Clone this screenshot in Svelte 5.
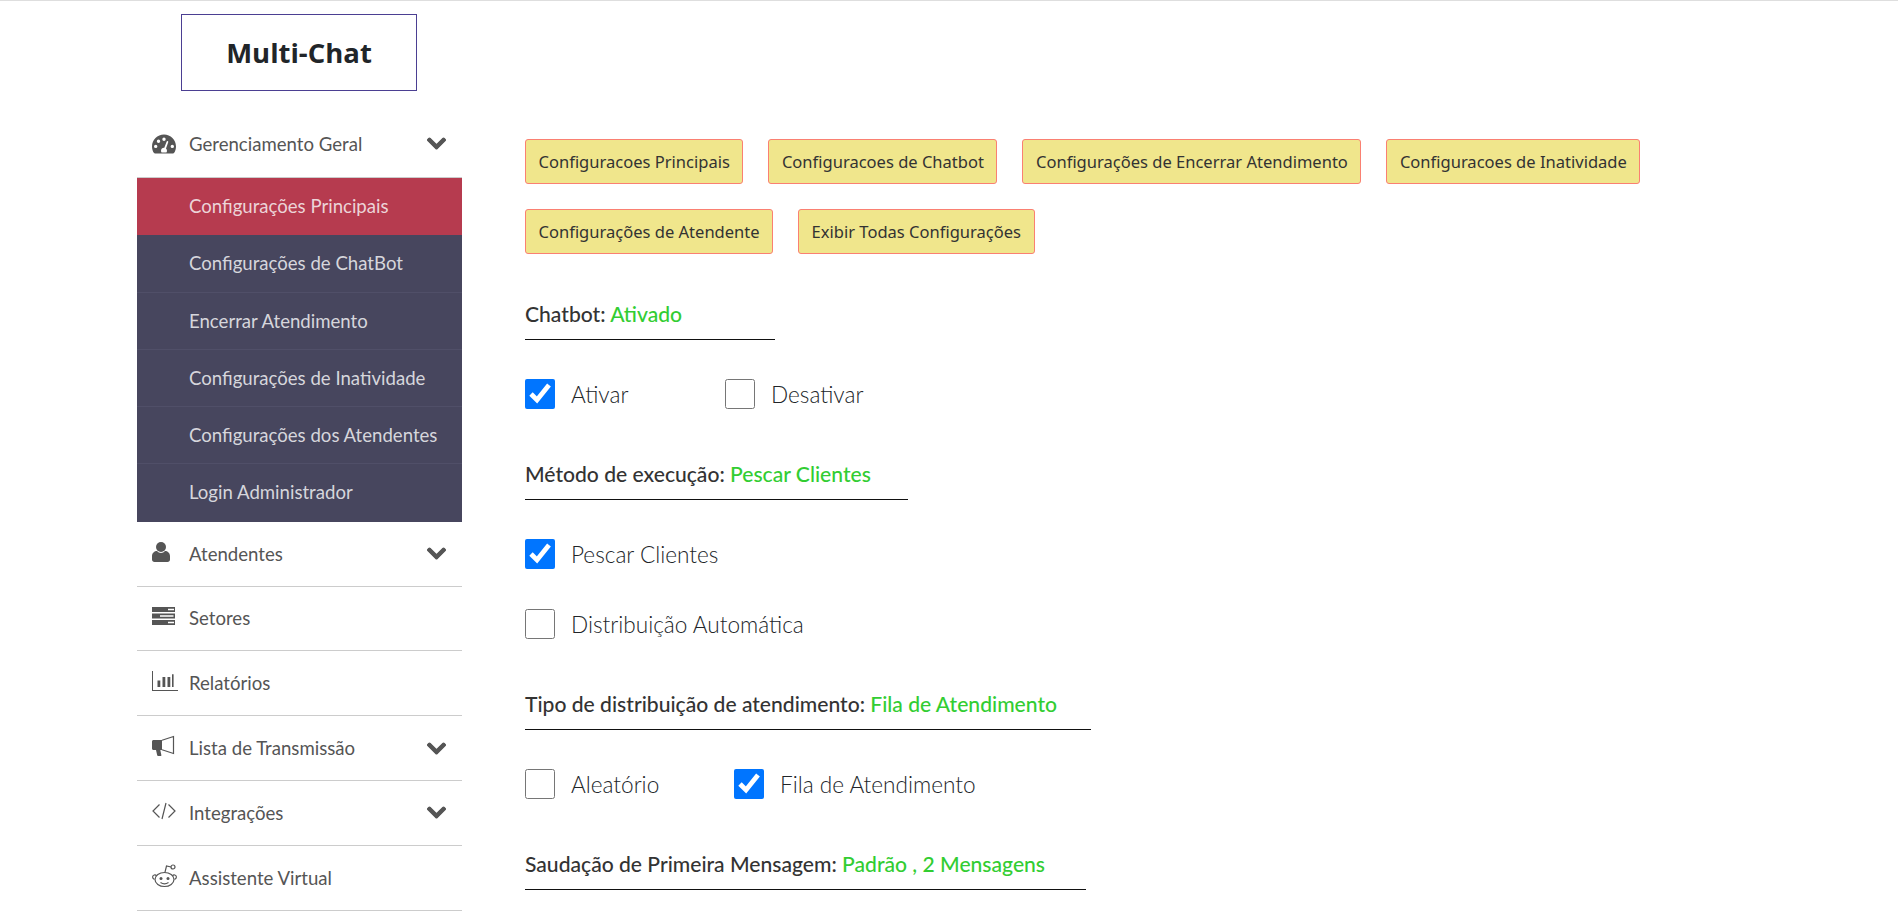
<script>
  const chevron = "M207.03 381.47 12.69 187.13a24 24 0 0 1 0-33.94l22.67-22.67a24 24 0 0 1 33.9 0L224 284.5l154.74-153.98a24 24 0 0 1 33.9 0l22.67 22.67a24 24 0 0 1 0 33.94L240.97 381.47a24 24 0 0 1-33.94 0z";

  const subItems = [
    { label: "Configurações Principais", active: true },
    { label: "Configurações de ChatBot" },
    { label: "Encerrar Atendimento" },
    { label: "Configurações de Inatividade" },
    { label: "Configurações dos Atendentes" },
    { label: "Login Administrador" },
  ];

  const navItems = [
    { label: "Atendentes", icon: "user", arrow: true },
    { label: "Setores", icon: "server" },
    { label: "Relatórios", icon: "chart" },
    { label: "Lista de Transmissão", icon: "bullhorn", arrow: true },
    { label: "Integrações", icon: "code", arrow: true },
    { label: "Assistente Virtual", icon: "reddit" },
  ];

  const buttons = [
    ["Configuracoes Principais", "Configuracoes de Chatbot", "Configurações de Encerrar Atendimento", "Configuracoes de Inatividade"],
    ["Configurações de Atendente", "Exibir Todas Configurações"],
  ];

  const sections = [
    {
      title: "Chatbot:", value: "Ativado", width: 250,
      rows: [[{ label: "Ativar", checked: true, width: 200 }, { label: "Desativar", checked: false }]],
    },
    {
      title: "Método de execução:", value: "Pescar Clientes", width: 383,
      rows: [[{ label: "Pescar Clientes", checked: true }], [{ label: "Distribuição Automática", checked: false }]],
    },
    {
      title: "Tipo de distribuição de atendimento:", value: "Fila de Atendimento", width: 566,
      rows: [[{ label: "Aleatório", checked: false, width: 209 }, { label: "Fila de Atendimento", checked: true }]],
    },
    { title: "Saudação de Primeira Mensagem:", value: "Padrão , 2 Mensagens", width: 561, rows: [] },
  ];
</script>

<div class="page">
  <aside class="sidebar">
    <div class="logo"><span>Multi-Chat</span></div>

    <nav>
      <div class="nav-row head">
        <svg class="icon" viewBox="0 0 26 24" preserveAspectRatio="xMinYMid">
          <path transform="translate(0 2.500)" fill-rule="evenodd" d="M12 0C5.400 0 0 5.300 0 12c0 2.400.7 4.800 2 6.600.3.300.7.400 1 .400h18c.4 0 .8-.1 1-.4 1.300-1.800 2-4.200 2-6.600C24 5.300 18.600 0 12 0zm0 3a1.700 1.700 0 1 1 0 3.400A1.700 1.700 0 0 1 12 3zM6.500 5.100a1.700 1.700 0 1 1 0 3.400 1.700 1.700 0 0 1 0-3.400zM3.700 10.200a1.700 1.700 0 1 1 0 3.400 1.700 1.700 0 0 1 0-3.400zm11.900-3.600c.5.200.8.700.6 1.200l-2.200 6.100c.6.600 1 1.400 1 2.300 0 .7-.2 1.300-.6 1.800H9.600c-.4-.5-.6-1.100-.6-1.800 0-1.700 1.300-3 3-3h.3l2.300-6c.2-.4.600-.7 1-.6zm4.700 3.600a1.700 1.700 0 1 1 0 3.400 1.700 1.700 0 0 1 0-3.400z" />
        </svg>
        <span class="label">Gerenciamento Geral</span>
        <svg class="chevron" viewBox="0 0 448 512"><path d={chevron} /></svg>
      </div>

      <ul class="sub">
        {#each subItems as item}
          <li class:active={item.active}>{item.label}</li>
        {/each}
      </ul>

      {#each navItems as item}
        <div class="nav-row">
          {#if item.icon === "user"}
            <svg class="icon" viewBox="0 0 26 24" preserveAspectRatio="xMinYMid">
              <circle cx="9" cy="7" r="5" />
              <path d="M0 19.500v-3.500C0 13 2.500 11 5 11c1 1.300 2.500 2 4 2s3-.7 4-2c2.500 0 5 2 5 5v3.500c0 1.400-1 2.500-2.500 2.500h-13C1 22 0 20.900 0 19.500z" />
            </svg>
          {:else if item.icon === "server"}
            <svg class="icon" viewBox="0 0 26 24" preserveAspectRatio="xMinYMid">
              <path fill-rule="evenodd" d="M0 3h23v5H0zm16 1.700v1.500h6V4.700zM0 9.500h23v5H0zm8 1.700v1.500h13.500v-1.500zM0 16h23v5H0zm16 1.700v1.500h6v-1.500z" />
            </svg>
          {:else if item.icon === "chart"}
            <svg class="icon" viewBox="0 0 26 24" preserveAspectRatio="xMinYMid">
              <path d="M0 2h1v19h25v1H0z" />
              <path d="M5.500 11.500h2.800V18H5.500zM10.500 8h2.800v10h-2.800zM15.500 8h2.800v10h-2.800zM20 5.300h1.600V18H20z" />
            </svg>
          {:else if item.icon === "bullhorn"}
            <svg class="icon" viewBox="0 0 26 24" preserveAspectRatio="xMinYMid">
              <path d="M1.500 6H10v10H8.300l1.100 5.300c.1.400-.2.700-.6.700H6c-.4 0-.7-.3-.8-.7L4 16H1.500C.7 16 0 15.300 0 14.500v-7C0 6.700.7 6 1.500 6z" />
              <path class="outline" d="M10 6.300 21.500 2.500v17L10 15.700" />
            </svg>
          {:else if item.icon === "code"}
            <svg class="icon" viewBox="0 0 26 24" preserveAspectRatio="xMinYMid">
              <path class="outline" d="M7.500 5.500 1 12l6.500 6.500M16.500 5.500 23 12l-6.500 6.500M14 4 10 20" />
            </svg>
          {:else}
            <svg class="icon" viewBox="0 0 26 24" preserveAspectRatio="xMinYMid">
              <g class="outline">
                <circle cx="21" cy="3" r="2" />
                <path d="M19 3 14.500 2 13 8.200" />
                <ellipse cx="12.500" cy="15.500" rx="9.500" ry="7" />
                <path d="M4.500 11.800C3.500 10.300.6 10.800.6 13c0 1.200.7 2 1.800 2.300M20.500 11.800c1-1.500 3.900-1 3.900 1.200 0 1.200-.7 2-1.800 2.300" />
                <path d="M8.500 18.500c2.200 1.400 5.800 1.400 8 0" />
              </g>
              <circle cx="9" cy="14.500" r="1.500" />
              <circle cx="16" cy="14.500" r="1.500" />
            </svg>
          {/if}
          <span class="label">{item.label}</span>
          {#if item.arrow}
            <svg class="chevron" viewBox="0 0 448 512"><path d={chevron} /></svg>
          {/if}
        </div>
      {/each}
    </nav>
  </aside>

  <main>
    <div class="btn-group">
      {#each buttons as row}
        <div class="btn-row">
          {#each row as text}
            <button type="button">{text}</button>
          {/each}
        </div>
      {/each}
    </div>

    {#each sections as section}
      <section>
        <h3 style="width: {section.width}px">{section.title} <span>{section.value}</span></h3>
        {#each section.rows as row}
          <div class="check-row">
            {#each row as opt}
              <label style={opt.width ? `width: ${opt.width}px` : ""}>
                <input type="checkbox" checked={opt.checked} />
                {opt.label}
              </label>
            {/each}
          </div>
        {/each}
      </section>
    {/each}
  </main>
</div>

<style>
  :global(body) {
    margin: 0;
    background: #fff;
  }

  .page {
    display: flex;
    height: 910px;
    overflow: hidden;
    border-top: 1px solid #dedede;
    font-family: Lato, "Noto Sans", sans-serif;
    color: #333;
  }

  .sidebar {
    width: 325px;
    margin-left: 137px;
    flex-shrink: 0;
  }

  .logo {
    width: 234px;
    height: 75px;
    margin: 13px 0 0 44px;
    border: 1px solid #4b3f92;
    display: flex;
    align-items: center;
    justify-content: center;
    font-family: "Open Sans", "Noto Sans", sans-serif;
    font-weight: 700;
    font-size: 27.5px;
    color: #212529;
  }

  .nav-row {
    display: flex;
    align-items: center;
    height: 63.8px;
    padding: 0 15px;
    border-bottom: 1px solid #ccc;
    font-size: 18.6px;
    color: #555;
  }

  .nav-row.head {
    height: 55px;
    padding-bottom: 6px;
    margin-top: 25px;
  }

  .icon {
    width: 26px;
    height: 24px;
    margin: 0 11px 4px 0;
    fill: #555;
    flex-shrink: 0;
  }

  .head .icon {
    margin-bottom: 0;
  }

  .outline {
    fill: none;
    stroke: #555;
    stroke-width: 1.2;
  }

  .label {
    flex: 1;
  }

  .chevron {
    width: 19px;
    height: 21px;
    margin-right: 1px;
    fill: #555;
    stroke: #555;
    stroke-width: 28;
  }

  .sub {
    list-style: none;
    margin: 0;
    padding: 0;
    background: #47465e;
    color: #d6d6dc;
    font-size: 18.6px;
  }

  .sub li {
    height: 57.3px;
    line-height: 57px;
    padding-left: 52px;
    box-sizing: border-box;
    border-bottom: 1px solid #504f68;
  }

  .sub li:last-child {
    border-bottom: 0;
  }

  .sub li.active {
    background: #b63b4f;
    color: #ecd4d8;
    border-bottom: 0;
  }

  main {
    padding: 138px 0 0 63px;
    flex: 1;
  }

  .btn-group {
    display: flex;
    flex-direction: column;
    gap: 25px;
    margin-bottom: 16px;
  }

  .btn-row {
    display: flex;
    gap: 25px;
  }

  button {
    height: 45px;
    padding: 0 12.5px;
    background: #f0e68c;
    border: 1px solid #fa8072;
    border-radius: 3px;
    font-family: "Noto Sans", sans-serif;
    font-size: 16.55px;
    color: #333;
  }

  section h3 {
    margin: 0;
    padding: 31px 0 12px;
    border-bottom: 1px solid #111;
    font-size: 21.1px;
    line-height: 26px;
    font-weight: 500;
    color: #333;
  }

  section h3 span {
    color: #32cd32;
  }

  .check-row {
    display: flex;
    height: 72px;
    align-items: center;
    font-size: 22.6px;
    font-weight: 300;
    color: #212529;
  }

  section h3 + .check-row {
    margin-top: 18px;
  }

  .check-row + .check-row {
    margin-top: -2px;
  }

  label {
    display: flex;
    align-items: center;
    gap: 16px;
  }

  input {
    width: 30px;
    height: 30px;
    margin: 0;
    flex-shrink: 0;
  }
</style>
